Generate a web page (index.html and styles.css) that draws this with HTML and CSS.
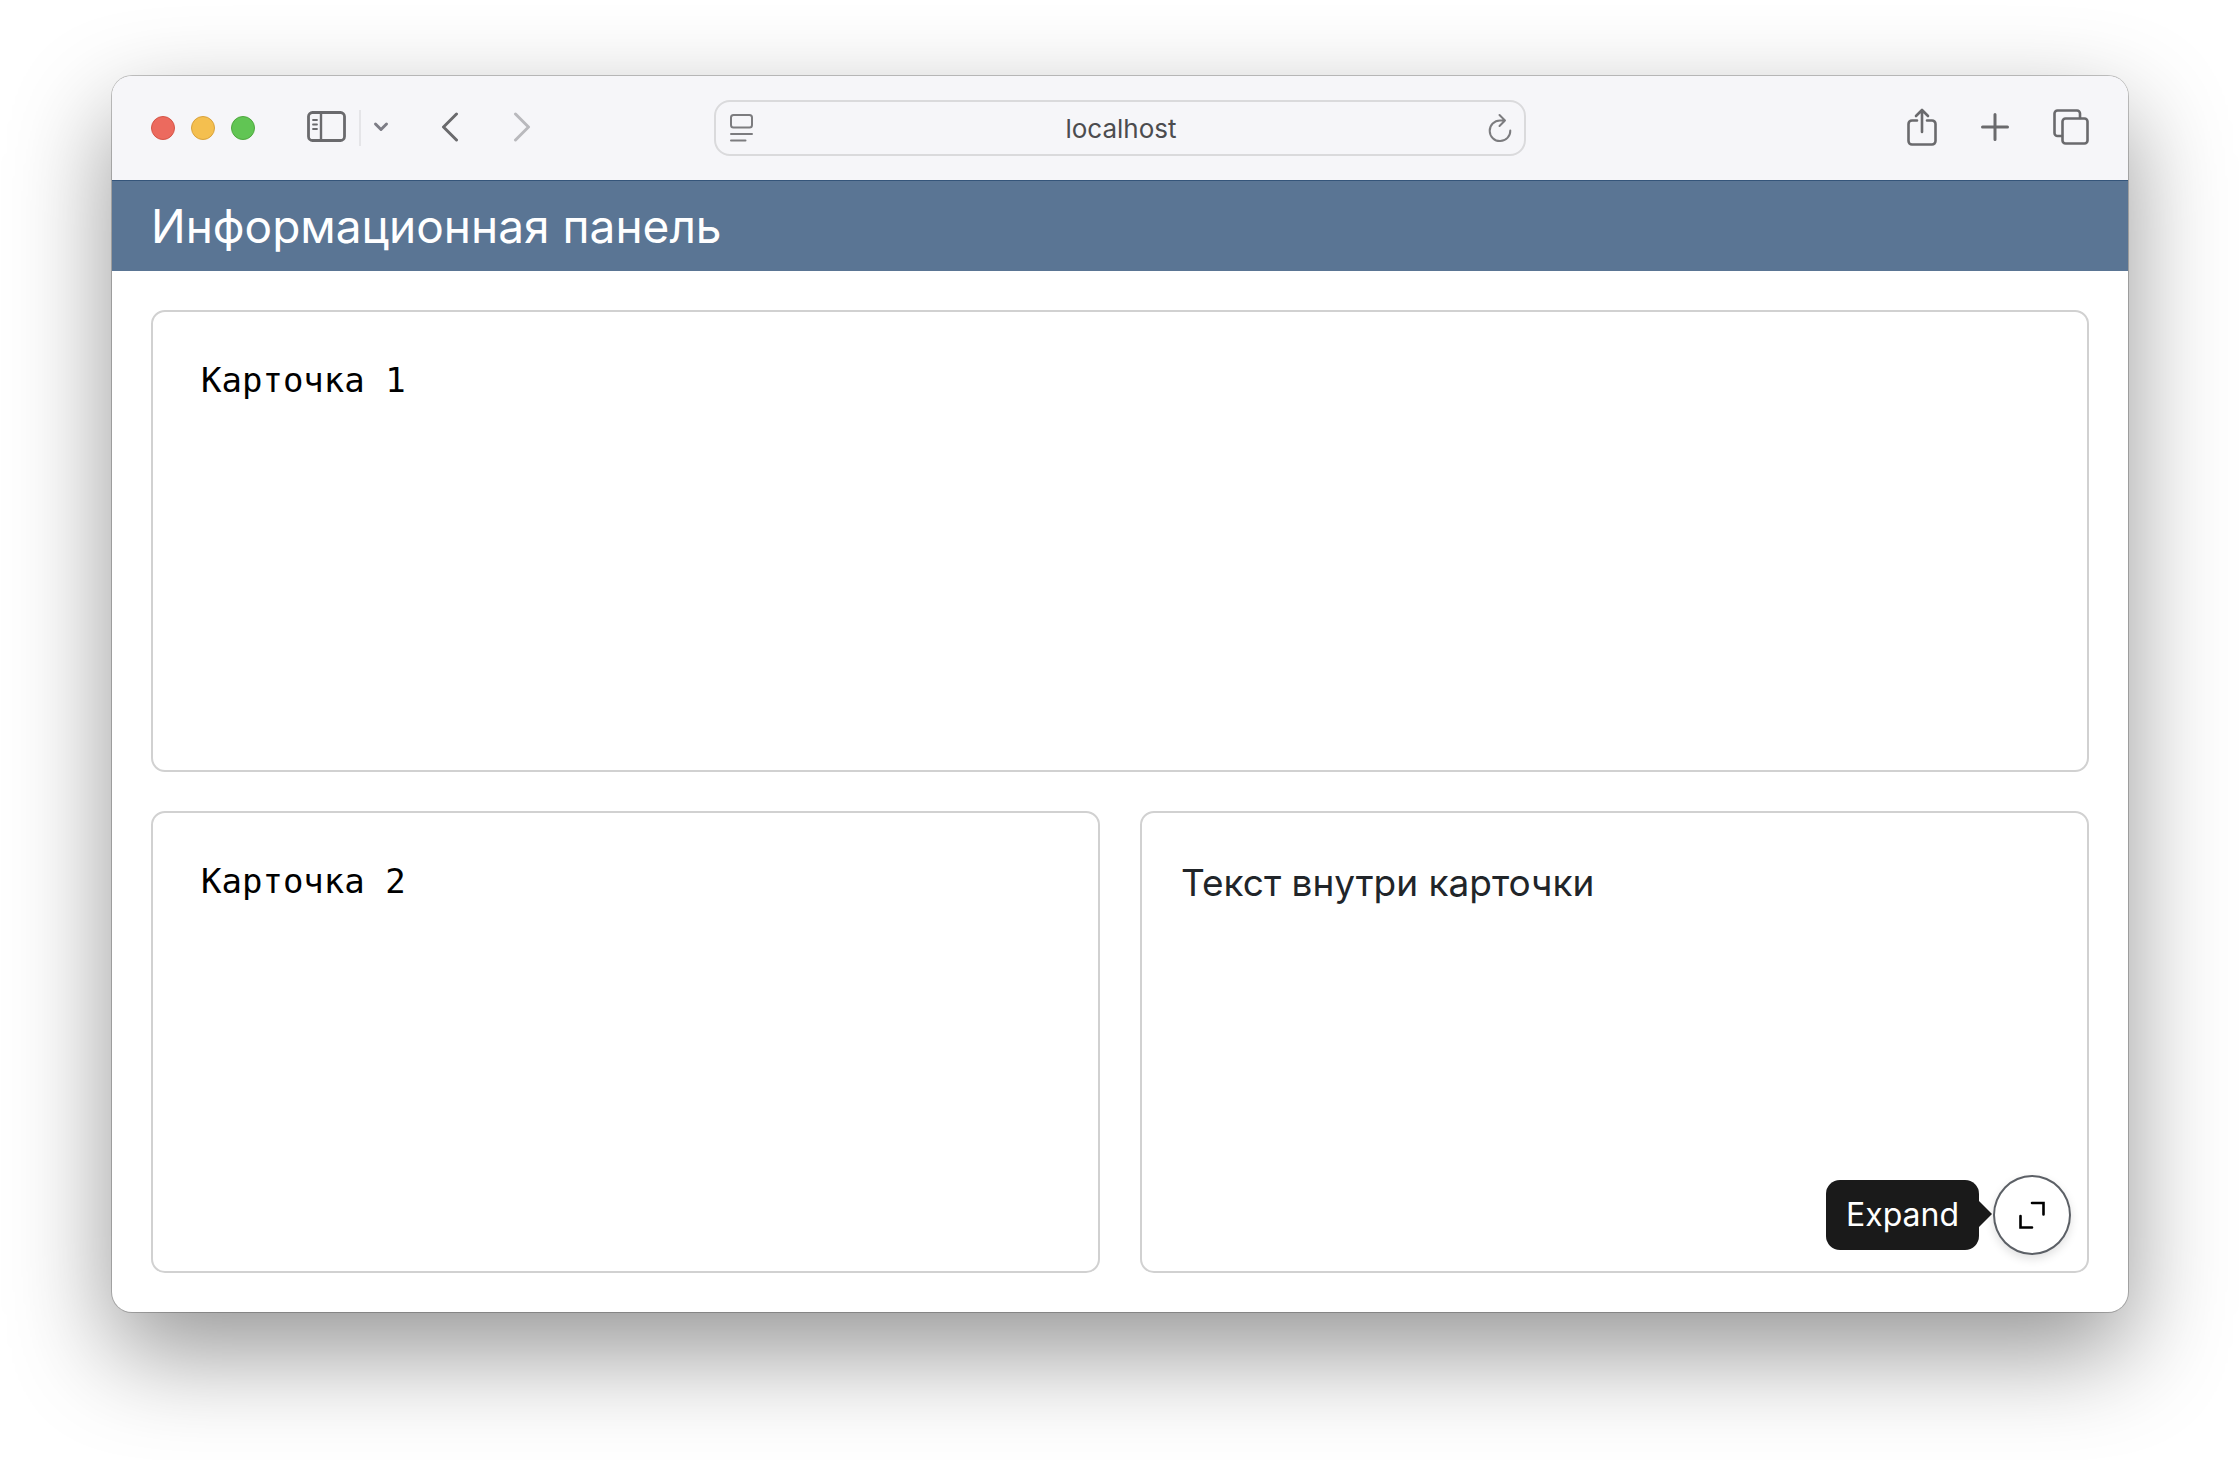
FILE: index.html
```html
<!DOCTYPE html>
<html lang="ru">
<head>
    <meta charset="UTF-8">
    <meta name="viewport" content="width=device-width, initial-scale=1.0">
    <title>Информационная панель</title>
    <link rel="stylesheet" href="styles.css">
</head>

<body>
    <div class="window">
        <!-- Панель браузера -->
        <div class="toolbar">
            <div class="toolbar-left">
                <div class="lights">
                    <button class="light red" aria-label="Закрыть"></button>
                    <button class="light yellow" aria-label="Свернуть"></button>
                    <button class="light green" aria-label="Развернуть"></button>
                </div>
                <div class="sidebar-group">
                    <button class="tool" aria-label="Боковая панель">
                        <svg width="40" height="32" viewBox="0 0 40 32">
                            <rect x="1.5" y="1.5" width="36" height="28" rx="4" stroke-width="2.8"/>
                            <path d="M14 2v27" stroke-width="2.4"/>
                            <path d="M6 9h4M6 13.5h4M6 18h4" stroke-width="1.8"/>
                        </svg>
                    </button>
                    <span class="divider"></span>
                    <button class="tool chevron" aria-label="Группы вкладок">
                        <svg width="16" height="12" viewBox="0 0 16 12">
                            <path d="M2.5 3l5.5 5.5L13.5 3" stroke-width="3"/>
                        </svg>
                    </button>
                </div>
                <div class="nav">
                    <button class="tool" aria-label="Назад">
                        <svg width="18" height="30" viewBox="0 0 18 30">
                            <path d="M15.5 2L2.5 15l13 13" stroke-width="3"/>
                        </svg>
                    </button>
                    <button class="tool forward" aria-label="Вперёд" disabled>
                        <svg width="18" height="30" viewBox="0 0 18 30">
                            <path d="M2.5 2l13 13-13 13" stroke-width="3"/>
                        </svg>
                    </button>
                </div>
            </div>

            <div class="address">
                <button class="tool" aria-label="Меню страницы">
                    <svg width="24" height="30" viewBox="0 0 24 30">
                        <rect x="1" y="2" width="21" height="12.5" rx="2.5" stroke-width="2"/>
                        <path d="M1 21h21M1 27.5h14.5" stroke-width="2"/>
                    </svg>
                </button>
                <input class="address-input" type="text" value="localhost" aria-label="Адрес">
                <button class="tool" aria-label="Обновить">
                    <svg width="24" height="30" viewBox="0 0 24 30">
                        <path d="M17 7.5H12A10.3 10.3 0 1 0 22.3 17.5M11.5 2l5.5 5.5-5.5 5.5" stroke-width="2"/>
                    </svg>
                </button>
            </div>

            <div class="toolbar-right">
                <button class="tool" aria-label="Поделиться">
                    <svg width="30" height="38" viewBox="0 0 30 38">
                        <path d="M10 12.5H5a3.5 3.5 0 0 0-3.5 3.5v17A3.5 3.5 0 0 0 5 36.5h20a3.5 3.5 0 0 0 3.5-3.5V16a3.5 3.5 0 0 0-3.5-3.5h-5" stroke-width="2.6"/>
                        <path d="M15 24V2M9 8l6-6 6 6" stroke-width="2.6"/>
                    </svg>
                </button>
                <button class="tool" aria-label="Новая вкладка">
                    <svg width="28" height="28" viewBox="0 0 28 28">
                        <path d="M14 1.5v25M1.5 14h25" stroke-width="3"/>
                    </svg>
                </button>
                <button class="tool" aria-label="Обзор вкладок">
                    <svg width="36" height="36" viewBox="0 0 36 36">
                        <path d="M9 27H4.5A3 3 0 0 1 1.5 24V4.5a3 3 0 0 1 3-3H24a3 3 0 0 1 3 3V9" stroke-width="2.6"/>
                        <rect x="9.5" y="9.5" width="25" height="25" rx="3" stroke-width="2.6"/>
                    </svg>
                </button>
            </div>
        </div>

        <!-- Заголовок страницы -->
        <header class="header">
            <h1>Информационная панель</h1>
        </header>

        <!-- Карточки -->
        <main class="cards">
            <section class="card wide">
                <pre>Карточка 1</pre>
            </section>
            <section class="card">
                <pre>Карточка 2</pre>
            </section>
            <section class="card">
                <p>Текст внутри карточки</p>
                <div class="expand">
                    <span class="tooltip" role="tooltip" id="expand-tip">Expand</span>
                    <button class="expand-button" aria-labelledby="expand-tip">
                        <svg width="32" height="32" viewBox="0 0 32 32">
                            <path d="M16 4h11.5v11.5M4.500 17v11.5H16"/>
                        </svg>
                    </button>
                </div>
            </section>
        </main>
    </div>
</body>
</html>
```

FILE: styles.css
```css
* {
    box-sizing: border-box;
}

body {
    display: flex;
    min-height: 100vh;
    margin: 0;
    padding: 76px 112px 148px;
    background-color: #fff;
    font-family: Inter, "Liberation Sans", sans-serif;
}

button {
    padding: 0;
    border: none;
    background: none;
}

.window {
    display: flex;
    flex-direction: column;
    flex: 1;
    border-radius: 20px;
    background-color: #fff;
    box-shadow: 0 0 0 1px rgba(0, 0, 0, 0.22), 0 40px 100px rgba(0, 0, 0, 0.42);
}

/* Панель браузера */
.toolbar {
    display: grid;
    grid-template-columns: 1fr minmax(0, 812px) 1fr;
    align-items: center;
    height: 104px;
    padding: 0 39px;
    border-radius: 20px 20px 0 0;
    background-color: #f6f6f9;
}
.toolbar-left,
.toolbar-right,
.lights,
.sidebar-group,
.nav {
    display: flex;
    align-items: center;
}
.toolbar-left {
    gap: 52px;
}
.toolbar-right {
    justify-content: flex-end;
    gap: 44px;
}
.toolbar-left .tool,
.toolbar-right .tool {
    padding-bottom: 2px;
}
.lights {
    gap: 16px;
}
.light {
    width: 24px;
    height: 24px;
    border: 1px solid;
    border-radius: 50%;
}
.red {
    border-color: #d55547;
    background-color: #ec6a5e;
}
.yellow {
    border-color: #d9a23c;
    background-color: #f4bf4f;
}
.green {
    border-color: #4fa83f;
    background-color: #61c554;
}
.sidebar-group {
    gap: 12px;
}
.divider {
    width: 2px;
    height: 36px;
    background-color: #e5e5e8;
}
.nav {
    gap: 54px;
}
.tool {
    display: flex;
    color: #6a6a6d;
}
.tool svg {
    fill: none;
    stroke: currentColor;
    stroke-linecap: round;
    stroke-linejoin: round;
}
.chevron {
    color: #7d7d86;
}
.forward {
    color: #b9b9bd;
}
.address {
    display: flex;
    align-items: center;
    height: 56px;
    padding: 0 12px 0 14px;
    border: 2px solid #dadadc;
    border-radius: 16px;
}
.address .tool {
    color: #7c7c7f;
}
.address-input {
    flex: 1;
    min-width: 0;
    padding: 0;
    border: none;
    background: none;
    color: #4c4c4f;
    font: 26px Inter, "Liberation Sans", sans-serif;
    text-align: center;
}

/* Заголовок страницы */
.header {
    padding: 15px 39px;
    border-top: 1px solid #35557a;
    background-color: #5a7594;
}
.header h1 {
    margin: 0;
    color: #fff;
    font-size: 46px;
    font-weight: 400;
    line-height: 60px;
}

/* Карточки */
.cards {
    display: grid;
    grid-template-columns: 1fr 1fr;
    grid-auto-rows: 1fr;
    flex: 1;
    gap: 39px 40px;
    padding: 39px;
}
.card {
    position: relative;
    padding: 48px 39px;
    border: 2px solid #d1d1d1;
    border-radius: 14px;
}
.wide {
    grid-column: 1 / -1;
}
.card pre {
    margin: 0;
    padding: 0 9px;
    color: #000;
    font: 34px/40px "DejaVu Sans Mono", monospace;
}
.card p {
    margin: 0;
    color: #212529;
    font-size: 37px;
    line-height: 44px;
}

/* Кнопка с подсказкой поверх карточки */
.expand {
    display: flex;
    align-items: center;
    gap: 14px;
    position: absolute;
    right: 16px;
    bottom: 16px;
}
.tooltip {
    position: relative;
    padding: 13px 20px;
    border-radius: 14px;
    background-color: #1a1a1a;
    color: #fff;
    font-size: 32px;
    line-height: 44px;
}
.tooltip::after {
    content: "";
    position: absolute;
    top: 50%;
    left: 100%;
    margin-top: -14px;
    border: 13px solid transparent;
    border-left-color: #1a1a1a;
    border-right: none;
}
.expand-button {
    display: flex;
    align-items: center;
    justify-content: center;
    width: 78px;
    height: 80px;
    border: 2px solid #5c6066;
    border-radius: 50%;
    background-color: #fff;
    box-shadow: 0 4px 10px rgba(0, 0, 0, 0.12);
}
.expand-button svg {
    fill: none;
    stroke: #000;
    stroke-width: 2.6;
    stroke-linecap: round;
}
```
